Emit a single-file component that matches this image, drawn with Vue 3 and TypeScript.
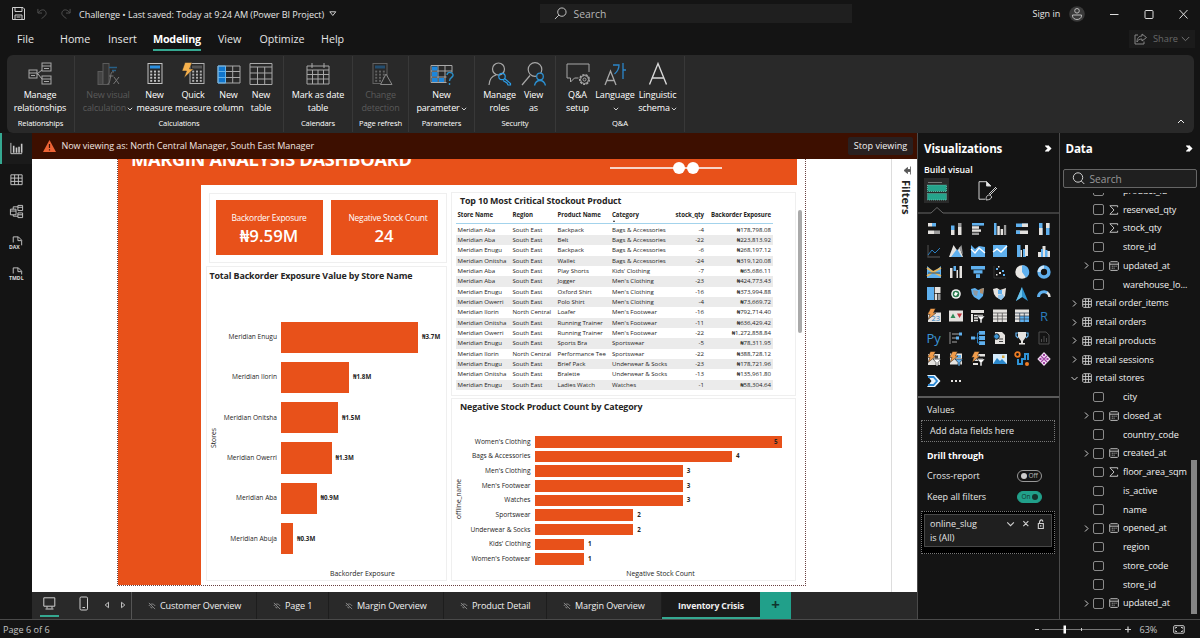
<script setup lang="ts">
interface RibbonButton {
  lines: [string, string]
  icon: string
  width: number
  muted?: boolean
  chevron?: boolean
}
interface RibbonGroup {
  label: string
  width: number
  pad: number
  buttons: RibbonButton[]
}
interface Field {
  name: string
  kind: 'plain' | 'sum' | 'date' | 'table'
  open?: boolean
}

const menu = [
  { name: 'File', width: 43 },
  { name: 'Home', width: 48 },
  { name: 'Insert', width: 45 },
  { name: 'Modeling', width: 65 },
  { name: 'View', width: 41.5 },
  { name: 'Optimize', width: 61.5 },
  { name: 'Help', width: 40 },
]

const g = 'fill="none" stroke="#a8a8a8"'
const blue = '#2b8fe0'
const calc = (x: number, c: string, b: string): string => {
  let s = `<rect x="${x}" y="1.5" width="14" height="20" fill="none" stroke="${c}"/><rect x="${x + 2}" y="3.5" width="10" height="3" fill="${b}"/>`
  for (let r = 0; r < 4; r++)
    for (let k = 0; k < 3; k++) s += `<rect x="${x + 2.2 + k * 3.8}" y="${8.6 + r * 3.1}" width="2" height="1.9" fill="${c}"/>`
  return s
}

const ribbonIcons: Record<string, string> = {
  relation: `<g ${g}><rect x="1" y="8" width="8" height="8"/><path d="M1 11h8M3 13.5h4"/><rect x="14" y="1" width="9" height="8"/><path d="M14 4h9M16 6.500h5"/><rect x="14" y="14" width="9" height="8"/><path d="M14 17h9M16 19.500h5M9 12l5-4M9 12h1l4 5"/></g>`,
  visual: `<g fill="none" stroke="#5b5b5b"><rect x="2" y="9.500" width="5" height="13" fill="#444"/><rect x="7" y="1.500" width="6" height="21" fill="#333"/></g><path d="M13 5.500h8M16 8.500h4" stroke="#286087" stroke-width="1.500"/><path d="M18 10c-3-1-3 2-3.500 5s-1 7-3 7M13 14h4.500M18 15l5 7M23 15l-5.500 7" fill="none" stroke="#777"/>`,
  measure: calc(5, '#c2c2c2', blue),
  quick: calc(9, '#b0b0b0', '#555') + '<path d="M4 0.500h7L8.500 7h4L3 16l2.500-7H1z" fill="#f5b04c" stroke="#292929" stroke-width=".5"/>',
  column: `<rect x="1" y="4" width="8" height="17" fill="#1176cd"/><g ${g}><path d="M1 4h22v17H1zM1 9.500h22M1 15.500h22M8.500 4v17M15.700 4v17"/></g><path d="M1 4h7.500v17H1zM1 9.500h7.500M1 15.500h7.500" fill="none" stroke="#62b4ee"/>`,
  table: `<g ${g}><path d="M1 1.500h22v21H1zM1 5h22M1 11h22M1 17h22M8.500 5v17.500M15.700 5v17.500"/></g>`,
  calendar: `<g ${g}><path d="M1 4h22v18H1zM1 8h22M1 12.500h22M1 17h22M6.500 8v14M12 8v14M17.500 8v14M6 1v5M18 1v5"/></g>`,
  change: calc(4, '#626262', '#244e70') + '<path d="M17 12l6 10.500H11.500z" fill="#292929" stroke="#8a8a8a"/>',
  parameter: `<g ${g}><path d="M1 3.500h21v17H1zM1 9h21M1 15h21M8 3.500v17M15 3.500v17"/></g><path d="M2 4.500h5.500v4H2zM2 10h5.500v4.500H2zM2 16h5.500v4H2zM9 16h5v4H9z" fill="#1d86db"/><rect x="16.500" y="10.500" width="6.500" height="12" fill="#292929"/><path d="M17 13c.5-4 6.500-3 6 .5-.5 2.500-3.500 2-3.500 5.500M19.500 21v2" fill="none" stroke="#2b8fc8" stroke-width="1.400"/>`,
  roles: `<g ${g} stroke-width="1.200"><circle cx="10.500" cy="7" r="6"/><path d="M1 23c.5-6 3-9 7-10"/></g><g fill="none" stroke="#2b9ce8" stroke-width="1.200"><circle cx="14" cy="14.500" r="3.200"/><path d="M16.500 16.500l6 5v1.500h-2.500l-1-2-4-2.500"/></g>`,
  viewas: `<g ${g} stroke-width="1.200"><circle cx="13" cy="7.500" r="6.800"/><path d="M0 23l8-9.500"/></g><g fill="none" stroke="#2b8fd0" stroke-width="1.300"><circle cx="18" cy="14.500" r="3.300" fill="#292929"/><path d="M12.500 23.500c1-4 3-5 5.500-5s4.500 1.500 5.500 5"/></g>`,
  qa: `<g ${g}><path d="M12.500 16h-4l-4 4v-4H1V2h22v8"/><circle cx="18.500" cy="17.500" r="4.800" stroke-dasharray="2.200 1.100" stroke-width="1.500"/><circle cx="18.500" cy="17.500" r="4"/><circle cx="18.500" cy="17.500" r="1.500"/></g>`,
  language: `<path d="M2 23L7.500 9 13 23M4 18.500h7" ${g} stroke-width="1.300"/><path d="M10 3h6c0 4-1 6-4.500 9M20 1v16M20 8h3" fill="none" stroke="#2b85c8" stroke-width="1.300"/>`,
  linguistic: `<path d="M3.500 22.500L12 1.500l8.500 21M6.500 16h11" fill="none" stroke="#d8d8d8" stroke-width="1.400"/>`,
}

const groups: RibbonGroup[] = [
  { label: 'Relationships', width: 68, pad: 3, buttons: [{ lines: ['Manage', 'relationships'], icon: 'relation', width: 60 }] },
  {
    label: 'Calculations', width: 209, pad: 6, buttons: [
      { lines: ['New visual', 'calculation'], icon: 'visual', width: 54, muted: true, chevron: true },
      { lines: ['New', 'measure'], icon: 'measure', width: 39 },
      { lines: ['Quick', 'measure'], icon: 'quick', width: 38 },
      { lines: ['New', 'column'], icon: 'column', width: 33 },
      { lines: ['New', 'table'], icon: 'table', width: 32 },
    ],
  },
  { label: 'Calendars', width: 69, pad: 4, buttons: [{ lines: ['Mark as date', 'table'], icon: 'calendar', width: 60 }] },
  { label: 'Page refresh', width: 56, pad: 4, buttons: [{ lines: ['Change', 'detection'], icon: 'change', width: 47, muted: true }] },
  { label: 'Parameters', width: 66, pad: 5, buttons: [{ lines: ['New', 'parameter'], icon: 'parameter', width: 55, chevron: true }] },
  {
    label: 'Security', width: 81, pad: 7, buttons: [
      { lines: ['Manage', 'roles'], icon: 'roles', width: 35 },
      { lines: ['View', 'as'], icon: 'viewas', width: 33 },
    ],
  },
  {
    label: 'Q&A', width: 129, pad: 7, buttons: [
      { lines: ['Q&A', 'setup'], icon: 'qa', width: 29 },
      { lines: ['Language', ''], icon: 'language', width: 46, chevron: true },
      { lines: ['Linguistic', 'schema'], icon: 'linguistic', width: 39, chevron: true },
    ],
  },
]

const navIcons = [
  '<path d="M2 2v11.500h12" /><path d="M5 5v7.500M8 7v5.500M10.700 6v6.500M13.500 3v9.500" stroke-width="1.700"/>',
  '<path d="M2 3h12v10.500H2zM2 6.500h12M2 10h12M6 3v10.500M10 3v10.500"/>',
  '<path d="M1.500 5.500h6v6h-6zM1.500 7.500h6M9.500 1.500h5v5.500h-5zM9.500 3.500h5M9.500 9.500h5v5h-5zM9.500 11.500h5M4.500 5.500V3h5M4.500 11.500V13h5"/>',
  '<path d="M4.500 8V2h5.500l3.500 3.500V11M9.500 2v4H13"/><text x="0" y="14.500">DAX</text>',
  '<path d="M4.500 8V2h5.500l3.500 3.500V9M9.500 2v4H13"/><text x="0" y="14.500">TMDL</text>',
]

const W = '#e4e2df'
const B = '#5fb0ee'
const D = '#2b7dbd'
const G = '#9b9b9b'
const p = (d: string, c: string): string => `<path d="${d}" fill="${c}"/>`
const l = (d: string, c: string, w = 1.3): string => `<path d="${d}" fill="none" stroke="${c}" stroke-width="${w}"/>`
const bolt = '<path d="M3.500-.5h5L6.500 4H9L1 10.500 3 5.500H.5z" fill="#ef9b4a" stroke="#141414" stroke-width=".5"/>'
const funnel = (c: string): string => `<path d="M6 7h8l-3 3.500V14H9v-3.500z" fill="${c}" stroke="#141414" stroke-width=".6"/>`

const visuals: string[] = [
  p('M1 1h4v3.500H1zM1 8.500h6V12H1z', W) + p('M5 1h4v3.500H5z', B) + p('M7 8.500h6V12H7z', G),
  p('M2 8h3.500v5H2z', W) + p('M2 3.500h3.500V8H2z', B) + p('M9 5h3.500v8H9z', W) + p('M9 1h3.500v4H9z', G),
  p('M1 1h12v2.600H1z', B) + p('M1 4.200h7v2.600H1z', W) + p('M1 7.400h9V9.800H1z', W) + p('M1 10.600h7V13H1z', G),
  p('M1 1h2.500v12H1z', B) + p('M4.300 4h2.500v9H4.300z', W) + p('M7.600 7h2.500v6H7.600z', W) + p('M10.900 3h2.300v10h-2.300z', G),
  p('M1 1.500h12v3.500H1z', B) + p('M7 1.500h6v3.500H7z', W) + p('M1 8.500h12V12H1z', W) + p('M1 8.500h4V12H1z', B),
  p('M2 1h3.500v12H2z', B) + p('M2 6h3.500v7H2z', W) + p('M9 1h3.500v12H9z', B) + p('M9 1h3.500v5H9z', W),
  l('M1 1v12h12', '#444') + l('M1 11l4-5 3 3 5-5', D, 1),
  p('M0 13L4.500 1l4 6 2-4L14 13z', W) + p('M2 13l6-8 5 8z', B) + p('M10 4l2.500-3 1.500 10z', G),
  p('M0 1l4 4 4-3 6 1v10H0z', B) + l('M0 5l4 4 4-5 6 5', '#fff', 1.400),
  p('M0 1h14v12H0z', B) + l('M0 8l4-3 4 3 6-6', '#fff', 1.500),
  p('M2 1h3.500v12H2z', B) + p('M5.500 6H7v7H5.500z', W) + p('M8 5h3v8H8z', B) + p('M10 1h3v11h-3z', W),
  p('M1 8h3v5H1zM5.500 2h3v11h-3zM10 7h3v6h-3z', W) + p('M4 5h2v8H4zM8 6h2.500v7H8z', B),
  p('M0 1l7 6 7-6v12H0z', B) + l('M0 3l6 4 8-4M0 11l6-4 8 4', '#e8b45a', 1.800) + l('M1 8h12', '#24506e', 1),
  p('M1 3h2.500v10H1z', W) + p('M4.500 1H7v5H4.500z', B) + p('M7.500 5H9v8H7.500z', W) + p('M10.500 1H13v12h-2.500z', W),
  p('M0 1h14v3.500H0z', B) + p('M2.500 5.200h9V8.500h-9z', B) + p('M5 9.200h4V13H5z', B),
  l('M1 1v12h12', '#333', 1) + p('M3 3h2v2H3zM9 5h2v2H9zM10 9h2v2h-2z', B) + p('M6 7h2v2H6zM5 1h1.500v1.500H5zM3 9h1.500v1.500H3z', W),
  '<circle cx="7" cy="7" r="6.700" fill="#e9e7e4"/>' + p('M7 .3A6.700 6.700 0 0 1 11 12.700L7 7z', B),
  '<circle cx="7" cy="7" r="4.900" fill="none" stroke="#5fb0ee" stroke-width="3.500"/>' + l('M7 2.100A4.900 4.900 0 0 0 2.100 7', '#cfe5f6', 3),
  p('M0 0h7v13H0z', B) + p('M7.700 0H13.500v6H7.700z', W) + p('M7.700 6.700h2.500V13H7.700z', W) + p('M10.900 6.700h2.600V13h-2.600z', G),
  '<circle cx="7" cy="7" r="4.800" fill="#f2f2f2"/><circle cx="7" cy="7" r="3.300" fill="#287a4e"/>' + p('M6 5l3 1-2 3-2-1z', '#fff'),
  p('M0 2l4-1 3 2 6-2-1 8-4 4-5-3-2-3z', B) + p('M2 3l5 1-1 5-3-1z', '#8d98a1') + p('M9 2l4-1-1 6-3-1z', '#ad8d6d'),
  p('M0 2l4-1 3 2 6-2-1 8-4 4-5-3-2-3z', W) + p('M5 3h4v4H5z', B) + p('M5 8l5-1 1 3-3 3-3-2z', '#91c8f2'),
  p('M7 0l6 14-6-4-6 4z', '#2f94cf') + p('M7 0v10l-6 4z', '#6cc2ea'),
  l('M1.500 10a5.500 5.500 0 0 1 9-4', B, 3) + l('M10 5.500a5.500 5.500 0 0 1 2.500 4.500', W, 2.500),
  p('M1 3.500h13v9.500H1z', W) + '<text x="4.500" y="11.500" font-size="7.500" fill="#2b7dbd">23</text>' + bolt,
  p('M0 1.500h14v11H0z', W) + p('M1.500 9L4 4.500 6.500 9z', '#2e8b57') + p('M8 4.500h5L10.500 9z', '#c0323b'),
  p('M0 1h13v3H0zM0 5h2v8H0z', W) + l('M3 6.500h9M3 9h4M3 11.500h4', W, 1.500) + funnel('#fff'),
  p('M0 .5h14v12.500H0z', W) + l('M0 4h14M0 7h14M0 10h14M4.700 4v9M9.300 4v9', '#555', .8),
  p('M0 .5h14v12.500H0z', W) + p('M5 7h9v6H5z', B) + l('M0 4h14M0 7h14M0 10h14M4.700 4v9M9.300 4v9', '#345', .8),
  '<text x="3" y="12" font-size="13" fill="#2b7dbd">R</text>',
  '<text x="-.5" y="11.500" font-size="13" fill="#3b94d4">Py</text>',
  l('M1 1v12M3 3h7M3 7h4M3 11h5', '#777', 1.300) + p('M10 1.500h3v3h-3zM7 5.500h3v3H7z', B),
  p('M0 5.500h4v3H0zM8 0h6v3.800H8zM8 5.100h6v3.800H8zM8 10.200h6V14H8z', B) + l('M4 7h5M6.500 2v10M6.500 2H9M6.500 12H9', D, 1),
  p('M2 1h7l3 3v9H2z', W) + '<circle cx="3.500" cy="5.500" r="2.800" fill="#3b94d4" stroke="#141414"/>' + l('M6 8h4M6 10.500h4', '#444', 1),
  p('M3 1h8v5l-3 4v2h2v1.500H4V12h2v-2L3 6z', W) + l('M3 2H1v3l2 2M11 2h2v3l-2 2', B, 1.200),
  l('M2 1h7l3 3v9H2zM4.500 11V8M7 11V5M9.500 11V7', '#4d4d4d', 1),
  p('M1 2h12v11H1z', W) + p('M8 3.500h3v3H8z', '#444') + bolt + funnel('#fff'),
  p('M1 1.500h12v11H1z', W) + p('M8 3h4v3H8z', B) + bolt + funnel(B),
  p('M2 2h12v2.500H2zM2 6.500h10V9H2zM2 11h5v2H2z', W) + bolt + funnel('#fff'),
  p('M0 2h14v10H0z', '#d5ebfa') + p('M0 12l4-6 3 3 2-2 5 5z', '#2b88cc') + p('M9 3.500h2.500V6H9z', '#d7a73c'),
  l('M3 7v5h4V7h3V2h3v6', '#2e93d6', 2) + '<circle cx="2.500" cy="2.500" r="2.300" fill="none" stroke="#ef7d24" stroke-width="1.800"/><circle cx="12" cy="12" r="2" fill="#ef7d24"/>',
  p('M7 0l6.700 7L7 14 .3 7z', '#f0d9f0') + l('M4 4l6 6M10 4l-6 6', '#a044a4', 1.200) + p('M6 2h2v2H6zM6 10h2v2H6zM2.500 6h2v2h-2zM9.500 6h2v2h-2z', '#a044a4'),
  p('M0 1h8l5.500 6L8 13H0l4.500-6z', '#e8f4fc') + l('M1 3h5.500L10 7l-3.500 4H1', '#2b88d4', 1.800),
  p('M2 6h2v2H2zM6 6h2v2H6zM10 6h2v2h-2z', W),
]

const fields: Field[] = [
  { name: 'product_id', kind: 'plain' },
  { name: 'reserved_qty', kind: 'sum' },
  { name: 'stock_qty', kind: 'sum' },
  { name: 'store_id', kind: 'plain' },
  { name: 'updated_at', kind: 'date' },
  { name: 'warehouse_lo...', kind: 'plain' },
  { name: 'retail order_items', kind: 'table' },
  { name: 'retail orders', kind: 'table' },
  { name: 'retail products', kind: 'table' },
  { name: 'retail sessions', kind: 'table' },
  { name: 'retail stores', kind: 'table', open: true },
  { name: 'city', kind: 'plain' },
  { name: 'closed_at', kind: 'date' },
  { name: 'country_code', kind: 'plain' },
  { name: 'created_at', kind: 'date' },
  { name: 'floor_area_sqm', kind: 'sum' },
  { name: 'is_active', kind: 'plain' },
  { name: 'name', kind: 'plain' },
  { name: 'opened_at', kind: 'date' },
  { name: 'region', kind: 'plain' },
  { name: 'store_code', kind: 'plain' },
  { name: 'store_id', kind: 'plain' },
  { name: 'updated_at', kind: 'date' },
]

const stores = [
  { name: 'Meridian Enugu', label: '₦3.7M', width: 137 },
  { name: 'Meridian Ilorin', label: '₦1.8M', width: 68 },
  { name: 'Meridian Onitsha', label: '₦1.5M', width: 57 },
  { name: 'Meridian Owerri', label: '₦1.3M', width: 50.5 },
  { name: 'Meridian Aba', label: '₦0.9M', width: 35.5 },
  { name: 'Meridian Abuja', label: '₦0.3M', width: 12 },
]
const categories: [string, number][] = [
  ["Women's Clothing", 5], ['Bags & Accessories', 4], ["Men's Clothing", 3], ["Men's Footwear", 3],
  ['Watches', 3], ['Sportswear', 2], ['Underwear & Socks', 2], ["Kids' Clothing", 1], ["Women's Footwear", 1],
]
const rows: string[][] = [
  ['Meridian Aba', 'South East', 'Backpack', 'Bags & Accessories', '-4', '₦178,798.08'],
  ['Meridian Aba', 'South East', 'Belt', 'Bags & Accessories', '-22', '₦223,813.92'],
  ['Meridian Enugu', 'South East', 'Backpack', 'Bags & Accessories', '-6', '₦268,197.12'],
  ['Meridian Onitsha', 'South East', 'Wallet', 'Bags & Accessories', '-24', '₦319,120.08'],
  ['Meridian Aba', 'South East', 'Play Shorts', "Kids' Clothing", '-7', '₦65,686.11'],
  ['Meridian Aba', 'South East', 'Jogger', "Men's Clothing", '-23', '₦424,773.43'],
  ['Meridian Enugu', 'South East', 'Oxford Shirt', "Men's Clothing", '-16', '₦373,994.88'],
  ['Meridian Owerri', 'South East', 'Polo Shirt', "Men's Clothing", '-4', '₦73,669.72'],
  ['Meridian Ilorin', 'North Central', 'Loafer', "Men's Footwear", '-16', '₦792,714.40'],
  ['Meridian Onitsha', 'South East', 'Running Trainer', "Men's Footwear", '-11', '₦636,429.42'],
  ['Meridian Owerri', 'South East', 'Running Trainer', "Men's Footwear", '-22', '₦1,272,858.84'],
  ['Meridian Enugu', 'South East', 'Sports Bra', 'Sportswear', '-5', '₦78,311.95'],
  ['Meridian Ilorin', 'North Central', 'Performance Tee', 'Sportswear', '-22', '₦388,728.12'],
  ['Meridian Enugu', 'South East', 'Brief Pack', 'Underwear & Socks', '-23', '₦178,721.96'],
  ['Meridian Onitsha', 'South East', 'Bralette', 'Underwear & Socks', '-13', '₦135,961.80'],
  ['Meridian Enugu', 'South East', 'Ladies Watch', 'Watches', '-1', '₦58,304.64'],
]
const tabs = [
  { name: 'Customer Overview', width: 125 },
  { name: 'Page 1', width: 72 },
  { name: 'Margin Overview', width: 115 },
  { name: 'Product Detail', width: 103 },
  { name: 'Margin Overview', width: 115 },
]
</script>

<template>
  <div class="app">
    <header class="titlebar">
      <svg class="ic save" viewBox="0 0 13 13"><path d="M.5.500h10.500l1.500 1.500v10.500H.5zM3 .5v4h7v-4M3 12.500V8h7v4.500M4.500 10h4" /></svg>
      <svg class="ic undo" viewBox="0 0 12 12"><path d="M1 1v4.500h4.500M1.500 5C4 1.500 8 1 9.500 4S9 8.500 5 11.500" /></svg>
      <svg class="ic redo" viewBox="0 0 12 12"><path d="M11 1v4.500H6.500M10.500 5C8 1.500 4 1 2.500 4S3 8.500 7 11.500" /></svg>
      <span class="doc">Challenge • Last saved: Today at 9:24 AM (Power BI Project)</span>
      <svg class="ic tri" viewBox="0 0 8 6"><path d="M.8.800h6L3.800 4.500z" /></svg>
      <div class="top-search">
        <svg class="ic mag" viewBox="0 0 14 14"><circle cx="8.500" cy="5.500" r="4.500" /><path d="M5.200 8.800L1 13" /></svg>
        <span>Search</span>
      </div>
      <span class="sign">Sign in</span>
      <svg class="avatar" viewBox="0 0 16 16"><circle cx="8" cy="8" r="7.800" fill="#3a3a3a" /><g fill="none" stroke="#bbb"><circle cx="8" cy="4.800" r="2.300" /><path d="M3.500 9h9c.5 6-9.500 6-9 0z" /></g></svg>
      <svg class="wins" viewBox="0 0 80 12"><g fill="none" stroke="#ddd"><path d="M0 6.500h8.500" /><rect x="35" y="2.500" width="8" height="8" rx="1" /><path d="M69.500 2l8 8.500M77.500 2l-8 8.500" /></g></svg>
    </header>

    <nav class="menu">
      <div v-for="m in menu" :key="m.name" class="menu-item" :style="{ width: m.width + 'px' }">
        <span :class="{ active: m.name === 'Modeling' }">{{ m.name }}</span>
      </div>
      <div class="share">
        <svg class="ic" viewBox="0 0 13 12"><path d="M4 2H1v9h9V8.500M8 1l4.500 3.500L8 8V6C5 6 4 7 3 9c0-4 2-6 5-6z" /></svg>
        <span>Share</span>
        <svg class="ic chev" viewBox="0 0 9 6"><path d="M.8 1l3.700 3.700L8.200 1" /></svg>
      </div>
    </nav>

    <section class="ribbon">
      <div v-for="grp in groups" :key="grp.label" class="group" :style="{ width: grp.width + 'px' }">
        <div class="buttons" :style="{ paddingLeft: grp.pad + 'px' }">
          <div v-for="b in grp.buttons" :key="b.icon" class="rbtn" :class="{ muted: b.muted }" :style="{ width: b.width + 'px' }">
            <svg class="ricon" viewBox="0 0 24 24" v-html="ribbonIcons[b.icon]"></svg>
            <span>{{ b.lines[0] }}</span>
            <span class="second">{{ b.lines[1] }}<svg v-if="b.chevron" class="ic rchev" viewBox="0 0 6 4"><path d="M.8.800L3 3 5.200.800" /></svg></span>
          </div>
        </div>
        <div class="glabel">{{ grp.label }}</div>
      </div>
      <svg class="ic collapse" viewBox="0 0 8 5"><path d="M1 4l3-3 3 3" /></svg>
    </section>

    <main class="main">
      <aside class="rail">
        <div v-for="(n, i) in navIcons" :key="i" class="rail-item" :class="{ on: i === 0 }"><svg viewBox="0 0 16 16" v-html="n"></svg></div>
      </aside>

      <section class="center">
        <div class="banner">
          <svg viewBox="0 0 13 12"><path d="M6.500 0L13 12H0z" fill="#ee6436" /><path d="M6.500 4v4M6.500 9.200v1.300" stroke="#3d1005" stroke-width="1.200" /></svg>
          <span>Now viewing as: North Central Manager, South East Manager</span>
          <button class="stop">Stop viewing</button>
        </div>
        <div class="canvas">
          <div class="page">
            <div class="page-head">
              <span>MARGIN ANALYSIS DASHBOARD</span>
              <svg class="slider" viewBox="0 0 112 14"><path d="M0 7h112" stroke="#f8d5c8" stroke-width="1.800" /><circle cx="69" cy="7" r="6" fill="#fff" /><circle cx="83" cy="7" r="6" fill="#fff" /></svg>
            </div>
            <div class="page-body">
              <div class="page-side"></div>
              <div class="col-left">
                <div class="cards">
                  <div class="card"><span class="cap">Backorder Exposure</span><b>₦9.59M</b></div>
                  <div class="card"><span class="cap shift">Negative Stock Count</span><b>24</b></div>
                </div>
                <div class="panel chart1">
                  <h3>Total Backorder Exposure Value by Store Name</h3>
                  <div class="plot">
                    <div class="vaxis">Stores</div>
                    <div class="bars">
                      <div v-for="s in stores" :key="s.name" class="brow">
                        <span class="blabel">{{ s.name }}</span>
                        <div class="bar" :style="{ width: s.width + 'px' }"></div>
                        <b>{{ s.label }}</b>
                      </div>
                    </div>
                  </div>
                  <div class="haxis">Backorder Exposure</div>
                </div>
              </div>
              <div class="col-right">
                <div class="panel tablebox">
                  <h3>Top 10 Most Critical Stockout Product</h3>
                  <div class="trow thead">
                    <span>Store Name</span><span>Region</span><span>Product Name</span><span class="sorted">Category</span><span>stock_qty</span><span>Backorder Exposure</span>
                  </div>
                  <div v-for="(r, i) in rows" :key="i" class="trow" :class="{ band: i % 2 === 1 }"><span v-for="(c, j) in r" :key="j">{{ c }}</span></div>
                  <div class="tscroll"></div>
                </div>
                <div class="panel chart2">
                  <h3>Negative Stock Product Count by Category</h3>
                  <div class="plot">
                    <div class="vaxis">offline_name</div>
                    <div class="bars">
                      <div v-for="c in categories" :key="c[0]" class="brow">
                        <span class="blabel">{{ c[0] }}</span>
                        <div class="bar" :style="{ width: c[1] * 49.4 + 'px' }"><b v-if="c[1] === 5">5</b></div>
                        <b v-if="c[1] < 5">{{ c[1] }}</b>
                      </div>
                    </div>
                  </div>
                  <div class="haxis">Negative Stock Count</div>
                </div>
              </div>
            </div>
          </div>
          <div class="filters">
            <svg viewBox="0 0 8 9"><path d="M0 4.500l3.500-3v2H6v2H3.500v2zM6.500.500v8" fill="#555" stroke="#555" stroke-width=".8" /></svg>
            <span>Filters</span>
          </div>
        </div>
        <div class="tabs">
          <div class="tools">
            <span class="desk"><svg class="ic" viewBox="0 0 13 13"><path d="M.8.800h11v8.400H.8zM4 9.500v2M9 9.500v2M2.500 12h8" /></svg></span>
            <svg class="ic phone" viewBox="0 0 10 15"><rect x="1" y="1" width="7.500" height="13" rx="1.200" /><path d="M3.500 11.500h2.500" /></svg>
            <svg class="ic arr" viewBox="0 0 22 8"><path d="M4.500 1.300v5.400L1.200 4zM17.500 1.300v5.400L20.800 4z" /></svg>
          </div>
          <div v-for="(t, i) in tabs" :key="i" class="tab" :style="{ width: t.width + 'px' }">
            <svg class="ic" viewBox="0 0 9 9"><path d="M1 1l7 7M1 4.500c1.500-3 5.500-3 7 0M3 5a1.500 1.500 0 0 0 2 1.500" /></svg>
            <span>{{ t.name }}</span>
          </div>
          <div class="tab current"><span>Inventory Crisis</span></div>
          <div class="plus">+</div>
        </div>
      </section>

      <aside class="viz">
        <div class="pane-head"><span>Visualizations</span><svg class="ic dbl" viewBox="0 0 8 9"><path d="M1.500 1.500l3 3-3 3M3.500 1.500l3 3-3 3" /></svg></div>
        <div class="build">Build visual</div>
        <div class="modes">
          <div class="mode"><svg viewBox="0 0 20 20"><path d="M1 1.500h14" stroke="#777" /><g fill="#25a48c" stroke="#7ad0bf" stroke-width=".7" stroke-dasharray="1 1"><rect x=".5" y="4" width="19" height="6.500" /><rect x=".5" y="12.500" width="19" height="6.500" /></g></svg></div>
          <svg class="ic fmt" viewBox="0 0 20 20"><path d="M13 5L8.500.700H1v17.500h6" /><path d="M8.500.700V5H13z" fill="#eee" /><path d="M19 7l-7 7M18 6l-7 7M8 19c0-4 2-6 4.500-4.500S13 19 8 19z" /></svg>
        </div>
        <svg class="ic notch" viewBox="0 0 141 8"><path d="M0 7h13l6-5.500L25 7h116" /></svg>
        <div class="visgrid"><svg v-for="(v, i) in visuals" :key="i" viewBox="0 0 14 14" v-html="v"></svg></div>
        <div class="wells">
          <div class="wl">Values</div>
          <div class="drop">Add data fields here</div>
          <div class="wl strong">Drill through</div>
          <div class="wl tg"><span>Cross-report</span><i class="toggle">Off</i></div>
          <div class="wl tg keep"><span>Keep all filters</span><i class="toggle on">On</i></div>
          <div class="drop filterwell">
            <div class="fcard">
              <div class="frow"><span>online_slug</span>
                <svg class="ic" viewBox="0 0 34 9"><path d="M1 3l3 3 3-3M15.500 2l4.500 4.500M20 2L15.500 6.500M29 4v4.500h4.500V4zM30 4c0-4 3-4 3-1.500M31.200 5.500v1.500" /></svg>
              </div>
              <div>is (All)</div>
            </div>
          </div>
        </div>
      </aside>

      <aside class="data">
        <div class="pane-head"><span>Data</span><svg class="ic dbl" viewBox="0 0 8 9"><path d="M1.500 1.500l3 3-3 3M3.500 1.500l3 3-3 3" /></svg></div>
        <div class="dsearch"><svg class="ic" viewBox="0 0 13 13"><circle cx="6" cy="5.500" r="4.700" /><path d="M9.300 9l3 3" /></svg><span>Search</span></div>
        <div class="flist">
          <div v-for="(f, i) in fields" :key="i" class="field" :class="f.kind">
            <svg class="ic fchev" viewBox="0 0 7 7"><path v-if="f.open" d="M.5 2L3.500 5l3-3" /><path v-else-if="f.kind === 'table' || f.kind === 'date'" d="M2 .5l3 3-3 3" /></svg>
            <i v-if="f.kind !== 'table'" class="box"></i>
            <svg class="ic fic" viewBox="0 0 11 11">
              <path v-if="f.kind === 'table'" d="M1.800.800h7.500l1 1v7.500l-1 1H1.800l-1-1V1.800zM.8 3.800h9.500M.8 7h9.500M4 .8v9.500M7.200.800v9.500" />
              <path v-else-if="f.kind === 'sum'" d="M9.500 2.500V.800H1l4.500 4.700L1 10.200h8.500V8.500" />
              <path v-else-if="f.kind === 'date'" d="M1.800.800h7.500l1 1v7.500l-1 1H1.800l-1-1V1.800zM.8 3.500h9.500M3 5.700h1.200M5 5.700h1.200M7.200 5.700h1.200M3 7.900h1.200M5 7.900h1.200" />
            </svg>
            <span>{{ f.name }}</span>
          </div>
          <div class="fscroll"></div>
        </div>
      </aside>
    </main>

    <footer class="status">
      <span>Page 6 of 6</span>
      <svg class="ic zoombar" viewBox="0 0 98 10"><path d="M0 5.500h4M90 5.500h6M93 2.500v6" stroke-width="1.200" /><path d="M7 5.500h79" stroke="#777" /><path d="M46.500 4v3" /><rect x="28.500" y="1.500" width="2.500" height="8" fill="#fff" stroke="none" /></svg>
      <span class="pct">63%</span>
      <svg class="ic fit" viewBox="0 0 12 9"><rect x=".7" y=".7" width="10.500" height="7.500" rx="1" /><path d="M2.500 3.500v-1h1.500M9.500 3.500v-1H8M2.500 5.500v1h1.500M9.500 5.500v1H8" /></svg>
    </footer>
  </div>
</template>

<style>
body { background: #141414; overflow: hidden; }
</style>

<style scoped>
.app { width: 1200px; height: 638px; display: flex; flex-direction: column; background: #141414; color: #e6e6e6; font: 9.2px/12px "Open Sans", "Noto Sans", sans-serif; white-space: nowrap; overflow: hidden; }
.app * { box-sizing: border-box; }
svg { flex: none; display: block; overflow: visible; }
.ic { fill: none; stroke: #cfcfcf; stroke-width: 1; }

.titlebar { height: 27px; flex: none; display: flex; align-items: center; padding: 0 0 0 12px; }
.save { width: 13px; height: 13px; }
.undo, .redo { width: 11px; height: 11px; stroke: #555; }
.undo { margin-left: 12px; }
.redo { margin-left: 12px; }
.doc { width: 246px; margin: 3px 0 0 8px; font-size: 9.100px; letter-spacing: -.07px; }
.tri { width: 8px; height: 6px; margin-left: 4px; }
.top-search { width: 312px; height: 19px; margin-left: 202.500px; padding-left: 14px; background: #1f1f1f; display: flex; align-items: center; gap: 7px; font-size: 10.400px; color: #b5b5b5; }
.mag { width: 13px; height: 13px; }
.sign { width: 36px; margin-left: 181px; font-size: 9px; }
.avatar { width: 16px; height: 16px; }
.wins { width: 80px; height: 12px; margin-left: 25px; }

.menu { height: 28px; flex: none; display: flex; align-items: flex-start; padding-left: 17px; font-size: 10.700px; }
.menu-item span { display: inline-block; height: 19px; margin-top: 4px; line-height: 16.500px; }
.menu-item .active { color: #fff; font-weight: 700; height: 20px; border-bottom: 2px solid #35a891; font-size: 10.800px; letter-spacing: -.25px; }
.share { width: 66px; height: 18px; margin: 3px 0 0 768px; background: #1b1b1b; display: flex; align-items: center; padding-left: 5px; font-size: 9.300px; color: #686868; }
.share .ic { width: 13px; height: 12px; stroke: #858585; margin-right: 6px; }
.share .chev { width: 9px; height: 6px; margin: 0 0 0 3px; stroke: #777; }

.ribbon { height: 78px; flex: none; margin: 0 6px 0 7px; background: #292929; border-radius: 6px; display: flex; position: relative; color: #fff; }
.group { border-right: 1px solid #383838; padding-top: 7px; height: 76px; margin-top: 1px; }
.buttons { display: flex; }
.rbtn { display: flex; flex-direction: column; align-items: center; font-size: 9px; line-height: 12.700px; height: 53px; letter-spacing: -.15px; }
.ricon { width: 24px; height: 24px; margin: -1px 0 3px; }
.second { display: flex; align-items: center; height: 12.700px; }
.rchev { width: 6px; height: 4px; margin: 2px 0 0 1px; }
.muted { color: #5a5a5a; }
.glabel { text-align: center; font-size: 7.600px; line-height: 12px; letter-spacing: -.15px; margin-top: .5px; }
.collapse { position: absolute; right: 9px; bottom: 9px; width: 8px; height: 5px; stroke: #eee; }

.main { height: 486px; flex: none; display: flex; }
.rail { width: 32px; background: #141414; }
.rail-item { height: 31.300px; display: flex; align-items: center; justify-content: center; border-left: 2px solid transparent; padding-right: 1px; }
.rail-item.on { border-left-color: #35a891; background: #1a1a1a; }
.rail-item svg { width: 15px; height: 15px; fill: none; stroke: #c8c8c8; }
.rail-item :deep(text) { font: 700 5.500px "Open Sans", sans-serif; fill: #ddd; stroke: none; }

.center { width: 885px; display: flex; flex-direction: column; }
.banner { height: 25.500px; flex: none; background: #3d0f00; display: flex; align-items: center; padding-left: 10.500px; color: #f2e6e2; }
.banner svg { width: 13px; height: 12px; }
.banner span { margin-left: 6px; flex: 1; font-size: 9px; letter-spacing: -.04px; }
.stop { border: 0; padding: 0; width: 65px; height: 18px; margin-right: 4px; background: #292020; color: #f0f0f0; font: inherit; font-size: 9.100px; border-radius: 2px; }
.canvas { flex: 1; min-height: 0; background: #fff; color: #252423; display: flex; }
.page { width: 689px; height: 427.500px; margin-left: 85px; border: 1px dotted #6a4040; border-top: 0; flex: none; }
.page-head { width: 679px; height: 26.500px; background: #e8511a; display: flex; overflow: hidden; color: #fff; font: 700 18.200px/20px "Open Sans", sans-serif; justify-content: space-between; }
.page-head span { margin: -9.500px 0 0 13px; letter-spacing: -.27px; }
.slider { width: 112px; height: 14px; margin: 2.500px 75px 0 0; }
.page-body { display: flex; height: 400px; }
.page-side { width: 82.500px; background: #e8511a; }
.col-left { width: 241px; margin-left: 5px; display: flex; flex-direction: column; }
.cards { height: 70px; margin: 8px 0 3px 3px; border: 1px solid #efefef; padding: 6px 8px 7px 6px; display: flex; gap: 8px; }
.card { flex: 1; background: #e8511a; color: #fff; display: flex; flex-direction: column; align-items: center; padding-top: 11.500px; font-size: 8.400px; }
.cap { letter-spacing: -.2px; }
.cap.shift { margin-left: 8px; }
.card b { font-size: 16.800px; line-height: 24px; font-weight: 600; margin-top: .5px; }
.panel { border: 1px solid #efefef; }
.panel h3 { margin: 0; font-size: 8.900px; line-height: 12px; font-weight: 700; letter-spacing: -.13px; }
.chart1 { height: 315px; padding: 3px 0 0 3px; }
.plot { display: flex; align-items: center; }
.vaxis { writing-mode: vertical-rl; transform: rotate(180deg); width: 10px; line-height: 10px; font-size: 6.800px; }
.haxis { font-size: 6.900px; text-align: center; line-height: 10px; }
.brow { display: flex; align-items: center; font-size: 6.600px; }
.brow b { font-size: 6.200px; margin-left: 4px; }
.blabel { text-align: right; }
.bar { background: #e8511a; }
.chart1 .plot { height: 287px; }
.chart1 .vaxis { margin-top: 25px; margin-left: -1px; }
.chart1 .bars { height: 241.800px; align-self: flex-start; margin-top: 35px; }
.chart1 .brow { height: 40.300px; }
.chart1 .bar { height: 31.300px; margin-left: 4px; }
.chart1 .blabel { width: 58.500px; }
.chart1 .haxis { margin-left: 70px; }

.col-right { width: 345px; margin-left: 4.500px; padding-top: 7px; }
.tablebox { height: 204px; padding: 2px 0 0 4px; position: relative; }
.tablebox h3, .chart2 h3 { padding-left: 4px; }
.trow { width: 317px; height: 10.330px; line-height: 10.330px; display: grid; grid-template-columns: 55px 45px 54.500px 62px 30px 67px; padding-left: 1.500px; font-size: 6.100px; letter-spacing: -.02px; }
.trow.band { background: #ebebeb; }
.trow span:nth-child(n + 5) { text-align: right; }
.thead { height: 17px; line-height: 16px; font-weight: 700; border-bottom: 1px solid #a3d3ec; letter-spacing: -.05px; margin-bottom: .6px; }
.sorted { position: relative; }
.sorted::after { content: ''; position: absolute; left: 1px; bottom: 1px; border: 1.500px solid transparent; border-bottom: 2px solid #222; border-top: 0; }
.tscroll { position: absolute; left: 346px; top: 17px; width: 3.500px; height: 123px; border-radius: 2px; background: #aaa; }

.chart2 { height: 183px; margin-top: 2px; padding: 2px 0 0 4px; }
.chart2 .plot { height: 165px; align-items: flex-start; }
.chart2 .vaxis { margin: 66px 0 0 -2.500px; font-size: 6.600px; }
.chart2 .bars { margin-top: 21.500px; }
.chart2 .brow { height: 14.650px; }
.chart2 .blabel { width: 67px; margin-right: 4px; }
.chart2 .bar { height: 11.600px; display: flex; align-items: center; justify-content: flex-end; padding-right: 4px; }
.chart2 .haxis { margin: -9px 0 0 70px; }

.filters { width: 26px; margin-left: auto; border-left: 1px solid #ddd; display: flex; flex-direction: column; align-items: center; padding: 7px 0 0 2px; gap: 5px; }
.filters svg { width: 8px; height: 9px; margin-left: 4px; }
.filters span { writing-mode: vertical-rl; font-size: 11.200px; font-weight: 700; line-height: 14px; letter-spacing: -.1px; }

.tabs { height: 27px; flex: none; background: #292929; display: flex; font-size: 9.100px; color: #f0f0f0; }
.tools { width: 100px; display: flex; align-items: flex-start; padding: 5px 0 0 8px; border-right: 1px solid #555; }
.desk { width: 19px; height: 20px; border-bottom: 2px solid #35a891; padding-left: 3px; }
.desk svg { width: 13px; height: 13px; }
.phone { width: 10px; height: 15px; margin: -1px 0 0 20px; }
.arr { width: 22px; height: 8px; margin: 4px 0 0 15px; stroke-width: .9; }
.tab { display: flex; align-items: center; padding: 1px 0 0 16px; gap: 4px; border-right: 1px solid #1d1d1d; letter-spacing: -.13px; }
.tab svg { width: 8px; height: 8px; stroke: #8c8c8c; }
.tab.current { width: 98px; background: #1a1a1a; border: 0; border-bottom: 2px solid #35a891; font-weight: 700; font-size: 8.700px; padding-top: 3px; }
.plus { width: 31px; background: #21a08a; color: #10352e; font-weight: 700; font-size: 15px; line-height: 25px; text-align: center; }

.viz { width: 142px; border-left: 1px solid #4a4a4a; }
.pane-head { height: 31px; display: flex; align-items: center; justify-content: space-between; padding: 0 7.500px 0 6px; font-weight: 700; font-size: 11.600px; letter-spacing: -.15px; color: #fff; }
.data .pane-head { padding-left: 5.500px; }
.dbl { width: 8px; height: 9px; stroke: #fff; stroke-width: 1.500; }
.build { padding-left: 6px; font-weight: 600; font-size: 8.800px; color: #fff; }
.modes { display: flex; height: 29px; padding: 2px 0 0 6px; }
.mode { width: 25px; height: 25px; background: #2a2a2a; padding: 2.500px; }
.mode svg { width: 20px; height: 20px; }
.fmt { width: 20px; height: 20px; margin: 3px 0 0 29px; }
.notch { width: 141px; height: 8px; stroke: #666; margin-top: 1px; }
.visgrid { display: grid; grid-template-columns: repeat(6, 22px); grid-auto-rows: 21.750px; padding: 4px 0 0 4.500px; height: 181.500px; justify-items: center; align-items: center; }
.visgrid svg { width: 14px; height: 14px; }
.visgrid :deep(text) { font-family: "Open Sans", sans-serif; }
.wells { border-top: 2px solid #5a5a5a; padding: 6px 4px 0 3px; font-size: 9px; }
.wl { padding: 0 0 0 6px; }
.drop { height: 22px; margin-top: 4px; border: 1px dotted #777; padding: 4px 0 0 8px; }
.strong { font-weight: 700; color: #fff; margin-top: 8px; font-size: 8.900px; }
.tg { display: flex; justify-content: space-between; padding-right: 13px; align-items: center; margin-top: 8.500px; }
.keep { margin-top: 8.500px; }
.toggle { width: 25px; height: 12px; border: 1px solid #999; border-radius: 6px; font: 6.500px/10px "Open Sans", sans-serif; display: flex; align-items: center; padding-left: 3px; gap: 1.500px; color: #bbb; }
.toggle::before { content: ''; width: 6px; height: 6px; border-radius: 3px; background: #ccc; }
.toggle.on { background: #21a08a; border-color: #21a08a; color: #12362f; flex-direction: row-reverse; padding: 0 3px 0 0; }
.toggle.on::before { background: #14332d; }
.filterwell { height: 43px; margin-top: 8px; padding: 2px; background: #000; }
.fcard { height: 33px; background: #1f1f1f; border: 1px solid #484848; padding: 2px 5px; line-height: 14.500px; }
.frow { display: flex; justify-content: space-between; align-items: center; }
.frow svg { width: 38px; height: 10px; margin-right: 2px; }

.data { width: 141px; border-left: 1px solid #4a4a4a; }
.dsearch { width: 134px; height: 19px; margin: 5px 0 5px 2.500px; border: 1px solid #666; border-radius: 2px; background: #1f1f1f; display: flex; align-items: center; padding-left: 8px; gap: 5px; font-size: 10.200px; color: #999; }
.dsearch svg { width: 13px; height: 13px; }
.flist { height: 424px; overflow: hidden; position: relative; }
.field { height: 18.760px; display: flex; align-items: center; padding-left: 22.500px; color: #f2f2f2; font-size: 9.100px; letter-spacing: -.11px; position: relative; top: -11.500px; }
.fchev { width: 7px; height: 7px; }
.box { width: 10.500px; height: 10.500px; border: 1px solid #8a8a8a; border-radius: 2px; margin: 0 5.500px 0 3.500px; }
.fic { width: 10px; height: 10px; margin-right: 4px; }
.field.table { padding-left: 10.500px; }
.field.table .fic { margin: 0 4px 0 4px; }
.fscroll { position: absolute; right: 3px; top: 267px; width: 6px; height: 154px; background: #858585; }

.status { height: 19px; flex: none; border-top: 1px solid #4a4a4a; display: flex; align-items: center; padding-left: 3px; color: #c4c4c4; font-size: 9.100px; }
.status span { margin-top: 2px; }
.zoombar { width: 98px; height: 10px; margin-left: 985px; }
.status .pct { margin-left: 7px; width: 18px; letter-spacing: -.1px; }
.fit { width: 12px; height: 9px; margin-left: 15px; }
</style>
